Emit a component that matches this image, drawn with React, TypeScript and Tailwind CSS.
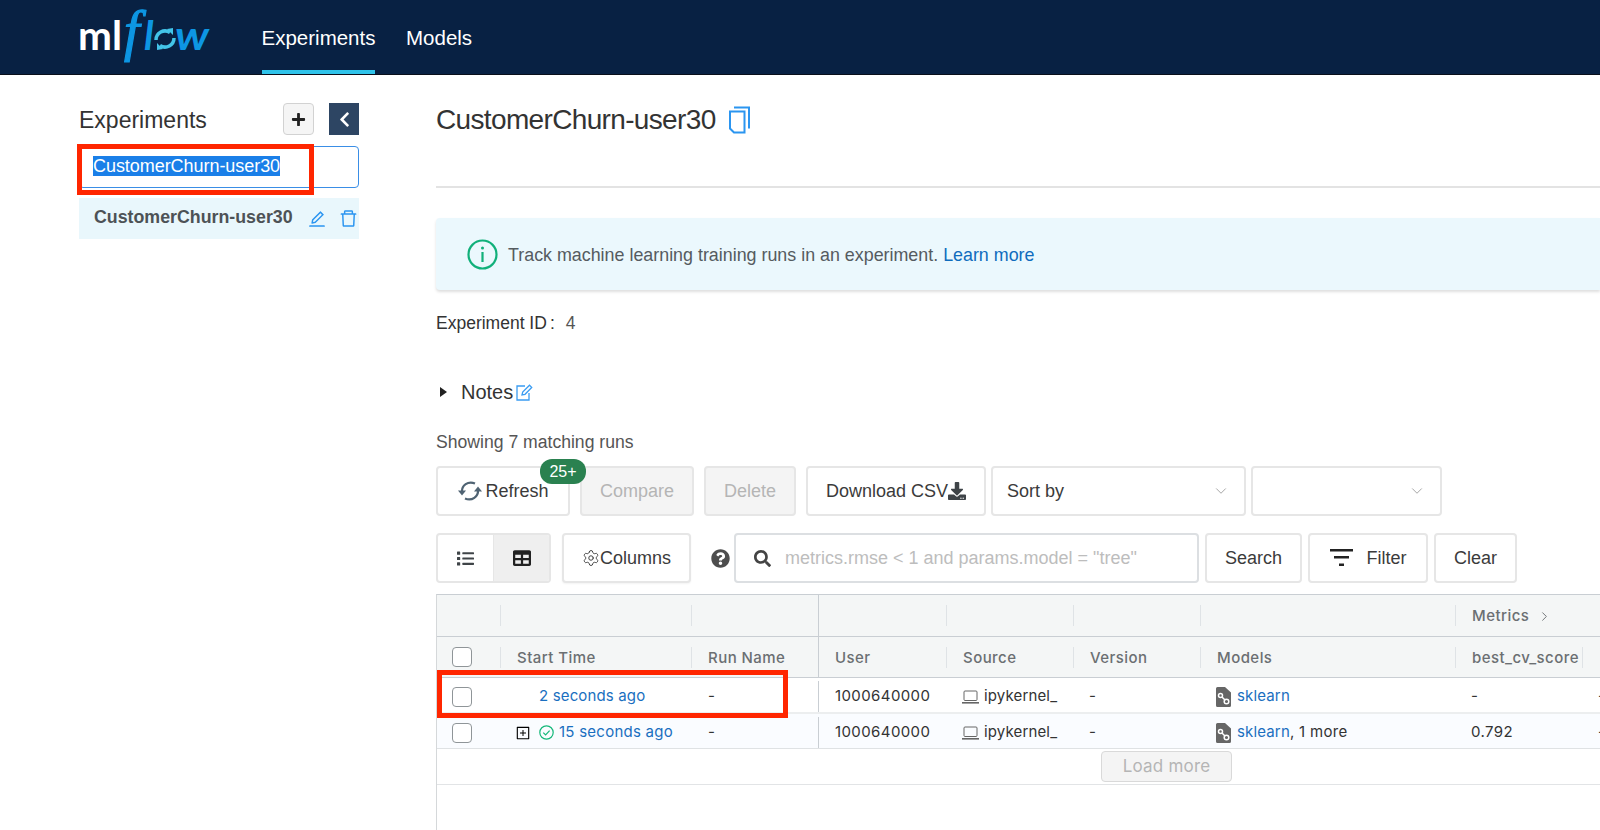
import React from "react";
import { ChevronDown, ChevronRight, Settings } from "lucide-react";
import { FaChevronLeft, FaDownload, FaList, FaPlus, FaQuestionCircle, FaSearch, FaTable } from "react-icons/fa";
import { AiOutlineDelete, AiOutlineEdit, AiOutlinePlusSquare } from "react-icons/ai";

const sans = "font-['Liberation_Sans',Arial,sans-serif]";

function Logo() {
  return (
    <svg width="140" height="60" viewBox="0 0 140 60" className="shrink-0 overflow-visible">
      <text x="0" y="42.500" fontFamily="Lato, sans-serif" fontWeight="700" fontSize="40" fill="#ffffff" textLength="44" lengthAdjust="spacingAndGlyphs">ml</text>
      <text x="46" y="43" fontFamily="Liberation Serif, serif" fontStyle="italic" fontSize="56" fill="#0d96e3" stroke="#0d96e3" strokeWidth="1.200">f</text>
      <text x="66" y="42.500" fontFamily="Lato, sans-serif" fontStyle="italic" fontWeight="700" fontSize="40" fill="#0d96e3">l</text>
      <g fill="none" stroke="#43c4e8" strokeWidth="3.500">
        <path d="M78 33 a9 9 0 0 1 14 -7.500" />
        <path d="M96 31 a9 9 0 0 1 -14 7.500" />
      </g>
      <path d="M89 22 l6 -1 l0 7 z M85 42 l-6 1 l0 -7 z" fill="#43c4e8" />
      <text x="97" y="42.500" fontFamily="Lato, sans-serif" fontStyle="italic" fontWeight="700" fontSize="40" fill="#0d96e3" textLength="34" lengthAdjust="spacingAndGlyphs">w</text>
    </svg>
  );
}

function CopyIcon() {
  return (
    <svg width="22" height="28" viewBox="0 0 22 28" fill="none" stroke="#2b95f0" strokeWidth="2">
      <path d="M6 1.500h15v21" />
      <path d="M2 5.500h14.500v21H6l-4-4z" />
    </svg>
  );
}

function NoteIcon() {
  return (
    <svg width="17" height="17" viewBox="0 0 17 17" fill="none" stroke="#3a9cf2" strokeWidth="1.300">
      <path d="M13 9v7H1V2h8" />
      <path d="M6 11l.7-3L13.500 1.200l2.200 2.200L9 10.300z" />
    </svg>
  );
}

function InfoIcon() {
  return (
    <svg width="31" height="31" viewBox="0 0 31 31" fill="none">
      <circle cx="15.500" cy="15.500" r="14" stroke="#11b07a" strokeWidth="2.200" />
      <rect x="14.400" y="13" width="2.200" height="10" fill="#11b07a" />
      <circle cx="15.500" cy="9" r="1.500" fill="#11b07a" />
    </svg>
  );
}

function RefreshIcon() {
  return (
    <svg width="26" height="24" viewBox="0 0 26 24" fill="none" stroke="#4f6373" strokeWidth="2.200">
      <path d="M5 13C4.500 6.500 11 1.500 18 4.500" />
      <path d="M1 11.500h8L5 16.500z" fill="#4f6373" stroke="none" />
      <path d="M21 11c.5 6.500-6 11.500-13 8.500" />
      <path d="M17 12.500h8L21 7.500z" fill="#4f6373" stroke="none" />
    </svg>
  );
}

function FilterIcon() {
  return (
    <svg width="23" height="18" viewBox="0 0 23 18" fill="#222">
      <rect x="0" y="0" width="23" height="2.500" />
      <rect x="4" y="7" width="15" height="2.500" />
      <rect x="9" y="14.500" width="5" height="2.500" />
    </svg>
  );
}

function CheckIcon() {
  return (
    <svg width="15" height="15" viewBox="0 0 15 15" fill="none" stroke="#14b87a" strokeWidth="1.200">
      <circle cx="7.500" cy="7.500" r="6.700" />
      <path d="M4.300 7.700l2.300 2.300 4-4.400" />
    </svg>
  );
}

function LaptopIcon() {
  return (
    <svg width="17" height="14" viewBox="0 0 17 14" fill="none" stroke="#666" strokeWidth="1">
      <rect x="2" y="1" width="13" height="9.500" rx="1" />
      <path d="M0 12.800h17" strokeWidth="1.600" />
    </svg>
  );
}

function ModelIcon() {
  return (
    <svg width="15" height="20" viewBox="0 0 15 20">
      <path d="M1.500 0H9l6 5.500V18.500a1.500 1.500 0 0 1-1.500 1.500h-12A1.500 1.500 0 0 1 0 18.500v-17A1.500 1.500 0 0 1 1.500 0z" fill="#666" />
      <g fill="none" stroke="#fff" strokeWidth="1.500">
        <circle cx="4.500" cy="8.500" r="2" />
        <circle cx="10.500" cy="14.500" r="2.300" />
        <path d="M6 10l3 3" />
      </g>
    </svg>
  );
}

function Btn({ className, children }: { className: string; children: React.ReactNode }) {
  return (
    <div className={`flex h-[50px] shrink-0 items-center justify-center rounded-[4px] border-2 border-[#e6e6e6] bg-white text-[18px] text-[#3b3b3b] ${className}`}>
      {children}
    </div>
  );
}

function Sep() {
  return <span className="mr-4 h-[21px] w-px shrink-0 bg-[#dfe3e6]" />;
}

function Checkbox() {
  return <span className="ml-[15px] h-[20px] w-[20px] rounded-[4px] border-[1.500px] border-[#8f9598] bg-white" />;
}

function HeaderRow({ top }: { top: boolean }) {
  const text = "mt-[2px] whitespace-nowrap text-[15px] font-medium tracking-[0.45px] text-[#6b6f72]";
  return (
    <div className={`flex border-b border-[#c9ced3] bg-[#f4f6f6] ${top ? "h-[42px]" : "h-[41px]"}`}>
      <div className="flex w-[63px] shrink-0 items-center">{top ? null : <Checkbox />}</div>
      <div className="flex w-[191px] shrink-0 items-center"><Sep />{top ? null : <span className={text}>Start Time</span>}</div>
      <div className="flex w-[127px] shrink-0 items-center"><Sep />{top ? null : <span className={text}>Run Name</span>}</div>
      <div className="flex w-[128px] shrink-0 items-center border-l border-[#c9ced3] pl-4">{top ? null : <span className={text}>User</span>}</div>
      <div className="flex w-[127px] shrink-0 items-center"><Sep />{top ? null : <span className={text}>Source</span>}</div>
      <div className="flex w-[127px] shrink-0 items-center"><Sep />{top ? null : <span className={text}>Version</span>}</div>
      <div className="flex w-[255px] shrink-0 items-center"><Sep />{top ? null : <span className={text}>Models</span>}</div>
      <div className="flex w-[127px] shrink-0 items-center">
        <Sep />
        {top ? (
          <span className={`flex items-center gap-[8px] ${text}`}>Metrics <ChevronRight size={15} strokeWidth={1.500} /></span>
        ) : (
          <span className={text}>best_cv_score</span>
        )}
      </div>
      <div className="flex w-[100px] shrink-0 items-center">{top ? null : <Sep />}</div>
    </div>
  );
}

function DataRow({ first }: { first: boolean }) {
  return (
    <div className={`flex pt-[3px] text-[15px] tracking-[0.15px] text-[#333] ${first ? "h-[36px] border-b-2 border-[#eceeef] bg-white" : "h-[35px] border-b border-[#dfe2e4] bg-[#fafcff]"}`}>
      <div className="flex w-[63px] shrink-0 items-center"><Checkbox /></div>
      <div className="flex w-[191px] shrink-0 items-center pl-[15px]">
        {first ? (
          <span className="ml-[24px] text-[#1a6fc0]">2 seconds ago</span>
        ) : (
          <>
            <AiOutlinePlusSquare size={16} className="mr-[8px] text-black" />
            <CheckIcon />
            <span className="ml-[5px] tracking-[0.25px] text-[#1a6fc0]">15 seconds ago</span>
          </>
        )}
      </div>
      <div className="flex w-[127px] shrink-0 items-center pl-[17px]">-</div>
      <div className="flex w-[128px] shrink-0 items-center border-l border-[#c9ced3] pl-4 tracking-[0.4px]">1000640000</div>
      <div className="flex w-[127px] shrink-0 items-center gap-[5px] pl-4"><LaptopIcon />ipykernel_</div>
      <div className="flex w-[127px] shrink-0 items-center pl-4">-</div>
      <div className="flex w-[255px] shrink-0 items-center pl-4">
        <ModelIcon />
        <span className="ml-[6px] text-[#1a6fc0]">sklearn</span>
        {first ? null : <span className="tracking-[0.3px]">, 1 more</span>}
      </div>
      <div className="flex w-[127px] shrink-0 items-center pl-4 tracking-[0.4px]">{first ? "-" : "0.792"}</div>
      <div className="flex w-[100px] shrink-0 items-center pl-4">-</div>
    </div>
  );
}

export default function App() {
  return (
    <div className={`flex h-[830px] w-[1600px] flex-col overflow-hidden bg-white ${sans}`}>
      <header className="flex h-[75px] shrink-0 items-stretch border-b border-[#0a0f1a] bg-[#082143] pl-[78px]">
        <div className="flex w-[184px] items-center"><Logo /></div>
        <div className="flex w-[113px] items-center justify-center border-b-4 border-[#2fc3ea] pt-[6px] text-[20.500px] text-white">Experiments</div>
        <div className="ml-[31px] flex items-center pt-[2px] text-[20.500px] text-white">Models</div>
      </header>

      <div className="flex min-h-0 flex-1">
        <aside className="w-[436px] shrink-0 pl-[79px]">
          <div className="w-[280px]">
            <div className="mt-[28px] flex h-[32px] items-center">
              <span className="mt-[3px] text-[23px] text-[#333]">Experiments</span>
              <div className="ml-auto flex h-[32px] w-[31px] items-center justify-center rounded-[4px] border border-[#d2d2d2] bg-[#f5f5f5]">
                <FaPlus size={15} className="text-[#222]" />
              </div>
              <div className="ml-[15px] flex h-[32px] w-[30px] items-center justify-center bg-[#2d4563]">
                <FaChevronLeft size={17} className="text-white" />
              </div>
            </div>
            <div className="relative mt-[11px] flex h-[42px] items-center rounded-[4px] border border-[#3a8ee6] pl-[13px] pb-[3px]">
              <span className="bg-[#1a7fe8] text-[18px] leading-[20px] tracking-[-0.05px] text-white">CustomerChurn-user30</span>
              <div className="absolute left-[-3px] top-[-3px] h-[51px] w-[237px] border-[5px] border-[#ff2600]" />
            </div>
            <div className="mt-[10px] flex h-[41px] items-center bg-[#e9f7fc] pl-[15px]">
              <span className="whitespace-nowrap pb-[2px] text-[17.800px] font-bold text-[#4d5256]">CustomerChurn-user30</span>
              <AiOutlineEdit size={20} className="ml-[14px] shrink-0 text-[#2b95f0]" />
              <AiOutlineDelete size={21} className="ml-[11px] shrink-0 text-[#2b95f0]" />
            </div>
          </div>
        </aside>

        <main className="flex min-w-0 flex-1 flex-col">
          <div className="mt-[28px] flex h-[34px] items-center gap-[12px]">
            <h1 className="text-[28px] tracking-[-0.65px] text-[#333]">CustomerChurn-user30</h1>
            <CopyIcon />
          </div>
          <div className="mt-[49px] h-[2px] bg-[#e3e3e3]" />
          <div className="mt-[30px] flex h-[72px] items-center rounded-l-[4px] bg-[#ebf8fd] pl-[31px] shadow-[0_2px_3px_rgba(0,0,0,0.13)]">
            <InfoIcon />
            <span className="ml-[10px] pt-[2px] text-[17.870px] text-[#555b60]">
              Track machine learning training runs in an experiment. <span className="text-[#0f6cbd]">Learn more</span>
            </span>
          </div>
          <div className="mt-[23px] flex h-[20px] items-center text-[17.500px] text-[#333]">
            Experiment ID<span className="ml-[3px] mr-[11px]">:</span><span className="text-[#555]">4</span>
          </div>
          <div className="mt-[49px] flex h-[20px] items-center text-[20px] text-[#333]">
            <span className="ml-[4px] mr-[14px] h-0 w-0 border-y-[5px] border-l-[7px] border-y-transparent border-l-[#222]" />
            Notes
            <span className="ml-[3px] flex"><NoteIcon /></span>
          </div>
          <div className="mt-[30px] flex h-[20px] items-center text-[17.600px] text-[#555]">Showing 7 matching runs</div>

          <div className="mt-[14px] flex h-[50px]">
            <div className="relative">
              <Btn className="w-[134px] gap-0">
                <RefreshIcon />
                <span className="ml-[2px]">Refresh</span>
              </Btn>
              <div className="absolute left-[104px] top-[-7px] flex h-[25px] w-[46px] items-center justify-center rounded-[12px] bg-[#2a8150] text-[16px] text-white">25+</div>
            </div>
            <Btn className="ml-[10px] w-[114px] !bg-[#f4f4f4] !text-[#b5b5b5]">Compare</Btn>
            <Btn className="ml-[10px] w-[92px] !bg-[#f4f4f4] !text-[#b5b5b5]">Delete</Btn>
            <Btn className="ml-[10px] w-[180px]">
              Download CSV
              <FaDownload size={18} className="text-[#3f4448]" />
            </Btn>
            <Btn className="ml-[5px] w-[255px] !justify-between pl-[14px] pr-[14px]">
              Sort by
              <ChevronDown size={18} strokeWidth={1} className="text-[#888]" />
            </Btn>
            <Btn className="ml-[5px] w-[191px] !justify-end pr-[14px]">
              <ChevronDown size={18} strokeWidth={1} className="text-[#888]" />
            </Btn>
          </div>

          <div className="mt-[17px] flex h-[50px] items-center">
            <div className="flex h-[50px] w-[115px] overflow-hidden rounded-[4px] border-2 border-[#e6e6e6]">
              <div className="flex w-[56px] items-center justify-center border-r border-[#e6e6e6]"><FaList size={17} className="text-[#3f4448]" /></div>
              <div className="flex flex-1 items-center justify-center bg-[#efefef]"><FaTable size={18} className="text-[#222]" /></div>
            </div>
            <Btn className="ml-[11px] w-[129px] shadow-[0_1px_2px_rgba(0,0,0,0.05)]">
              <Settings size={18} strokeWidth={1.200} className="text-[#333]" />
              Columns
            </Btn>
            <FaQuestionCircle size={19} className="ml-[20px] text-[#4d4d4d]" />
            <div className="ml-[4px] flex h-[50px] w-[465px] items-center rounded-[4px] border-2 border-[#dcdfe2] pl-[18px] text-[18px] text-[#bdbdbd]">
              <FaSearch size={17} className="mr-[14px] text-[#444]" />
              metrics.rmse &lt; 1 and params.model = "tree"
            </div>
            <Btn className="ml-[6px] w-[97px]">Search</Btn>
            <Btn className="ml-[6px] w-[120px] gap-[14px]"><FilterIcon />Filter</Btn>
            <Btn className="ml-[6px] w-[83px]">Clear</Btn>
          </div>

          <div className="relative mt-[11px] w-[1170px] flex-1 border-l border-t border-[#c9ced3] border-l-[#d5d8da] font-['Inter',sans-serif]">
            <HeaderRow top />
            <HeaderRow top={false} />
            <DataRow first />
            <DataRow first={false} />
            <div className="flex h-[36px] justify-start border-b border-[#e2e4e6] pl-[664px] pt-[2px]">
              <div className="flex h-[31px] w-[131px] items-center justify-center rounded-[4px] border border-[#d9d9d9] bg-[#f4f4f4] text-[17px] tracking-[0.2px] text-[#b5b5b5]">Load more</div>
            </div>
            <div className="absolute left-[0px] top-[75px] h-[48px] w-[351px] border-[5px] border-[#ff2600]" />
          </div>
        </main>
      </div>
    </div>
  );
}
